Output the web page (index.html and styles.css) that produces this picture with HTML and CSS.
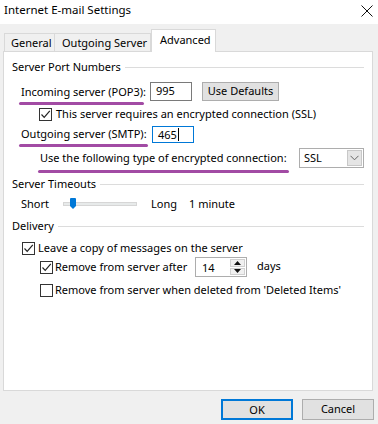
FILE: index.html
```html
<!DOCTYPE html>
<html lang="en">
<head>
    <meta charset="UTF-8">
    <title>Internet E-mail Settings</title>
    <link rel="stylesheet" href="styles.css">
</head>
<body>
    <div class="window">
        <div class="titlebar">
            <span class="title">Internet E-mail Settings</span>
            <svg class="close" width="12" height="12" viewBox="0 0 12 12">
                <path d="M0.5 0.5 L11.5 11.5 M11.5 0.5 L0.5 11.5" stroke="#111" stroke-width="1" fill="none"/>
            </svg>
        </div>

        <div class="tabs">
            <div class="tab tab-general">General</div>
            <div class="tab tab-outgoing">Outgoing Server</div>
            <div class="tab tab-active">Advanced</div>
        </div>

        <div class="panel">
            <div class="group-head">
                <span>Server Port Numbers</span>
                <i class="rule"></i>
            </div>

            <div class="row row-incoming">
                <span class="label mark mark-in">Incoming server (POP3):</span>
                <div class="field field-port">995</div>
                <div class="btn btn-defaults">Use Defaults</div>
            </div>

            <div class="row row-ssl">
                <span class="check checked">
                    <svg width="11" height="11" viewBox="0 0 11 11"><path d="M1.5 5.5 L4.2 8.3 L9.8 1.8" stroke="#222" stroke-width="1.2" fill="none"/></svg>
                </span>
                <span class="label">This server requires an encrypted connection (SSL)</span>
            </div>

            <div class="row row-outgoing">
                <span class="label mark mark-out">Outgoing server (SMTP):</span>
                <div class="field field-port field-focus">465<i class="caret"></i></div>
            </div>

            <div class="row row-encrypt">
                <span class="label mark mark-enc">Use the following type of encrypted connection:</span>
                <div class="select">
                    <span>SSL</span>
                    <span class="select-btn">
                        <svg width="9" height="6" viewBox="0 0 9 6"><path d="M0.5 0.8 L4.5 4.8 L8.5 0.8" stroke="#666" stroke-width="1" fill="none"/></svg>
                    </span>
                </div>
            </div>

            <div class="group-head group-timeouts">
                <span>Server Timeouts</span>
                <i class="rule"></i>
            </div>

            <div class="row row-slider">
                <span class="label short">Short</span>
                <div class="track">
                    <svg class="thumb" width="6" height="11" viewBox="0 0 6 11"><path d="M0 1 Q0 0 1 0 L5 0 Q6 0 6 1 L6 8 L3 11 L0 8 Z" fill="#0078D7"/></svg>
                </div>
                <span class="label long">Long</span>
                <span class="label">1 minute</span>
            </div>

            <div class="group-head group-delivery">
                <span>Delivery</span>
                <i class="rule"></i>
            </div>

            <div class="row row-leave">
                <span class="check checked">
                    <svg width="11" height="11" viewBox="0 0 11 11"><path d="M1.5 5.5 L4.2 8.3 L9.8 1.8" stroke="#222" stroke-width="1.2" fill="none"/></svg>
                </span>
                <span class="label">Leave a copy of messages on the server</span>
            </div>

            <div class="row row-after">
                <span class="check checked">
                    <svg width="11" height="11" viewBox="0 0 11 11"><path d="M1.5 5.5 L4.2 8.3 L9.8 1.8" stroke="#222" stroke-width="1.2" fill="none"/></svg>
                </span>
                <span class="label label-after">Remove from server after</span>
                <div class="spin">
                    <span class="spin-value">14</span>
                    <span class="spin-btns">
                        <span class="spin-up"><svg width="7" height="4" viewBox="0 0 7 4"><path d="M0 4 L3.5 0 L7 4 Z" fill="#111"/></svg></span>
                        <span class="spin-down"><svg width="7" height="4" viewBox="0 0 7 4"><path d="M0 0 L3.5 4 L7 0 Z" fill="#111"/></svg></span>
                    </span>
                </div>
                <span class="label days">days</span>
            </div>

            <div class="row row-deleted">
                <span class="check"></span>
                <span class="label">Remove from server when deleted from 'Deleted Items'</span>
            </div>
        </div>

        <div class="footer">
            <div class="btn btn-action btn-primary">OK</div>
            <div class="btn btn-action">Cancel</div>
        </div>
    </div>
</body>
</html>
```

FILE: styles.css
```css
body {
    margin: 0;
    font-family: "Noto Sans", "Open Sans", sans-serif;
    font-size: 11px;
    color: #000;
    background-color: #F0F0F0;
}

.window {
    width: 378px;
    height: 424px;
    background-color: #F0F0F0;
    overflow: hidden;
}

.titlebar {
    height: 24px;
    background: #FFFFFF;
    display: flex;
    align-items: center;
    justify-content: space-between;
    padding: 0 5px 4px 4px;
    box-sizing: border-box;
}

.title {
    font-size: 11.5px;
    line-height: 16px;
}

.close {
    display: block;
    margin-top: 2px;
}

.tabs {
    display: flex;
    align-items: flex-end;
    height: 22px;
    margin-top: 5px;
    padding-left: 4px;
    position: relative;
    z-index: 1;
    white-space: nowrap;
}

.tab {
    height: 18px;
    box-sizing: border-box;
    border: 1px solid #D9D9D9;
    border-bottom: none;
    padding: 0 0 0 6px;
    line-height: 17px;
    background: #F0F0F0;
}

.tab-general {
    width: 51px;
}

.tab-outgoing {
    width: 96px;
    border-left: none;
    padding-left: 7px;
}

.tab-active {
    width: 65px;
    height: 23px;
    margin-bottom: -1px;
    background: #FFFFFF;
    border-left: 1px solid #D9D9D9;
    line-height: 19px;
    padding-left: 8px;
}

.panel {
    width: 370px;
    height: 340px;
    margin-left: 3px;
    box-sizing: border-box;
    background: #FFFFFF;
    border: 1px solid #D9D9D9;
    padding: 8px 8px 0 8px;
}

.group-head {
    display: flex;
    align-items: center;
    height: 14px;
    line-height: 14px;
    white-space: nowrap;
}

.group-head .rule {
    flex: 1;
    height: 0;
    border-top: 1px solid #DCDCDC;
    margin-left: 4px;
}

.group-timeouts {
    margin-top: 9px;
}

.group-delivery {
    margin-top: 8px;
}

.row {
    display: flex;
    align-items: center;
    line-height: 14px;
}

.label {
    white-space: nowrap;
}

.mark {
    position: relative;
}

.mark::after {
    content: "";
    position: absolute;
    left: -2px;
    right: -3px;
    bottom: -6px;
    height: 3px;
    border-radius: 2px;
    background: #A24BA4;
}

.mark-in {
    width: 120px;
}

.mark-out {
    width: 122px;
}

.mark-out::after {
    right: -5px;
}

.row-incoming {
    height: 19px;
    margin-top: 8px;
    padding-left: 9px;
}

.field {
    height: 19px;
    box-sizing: border-box;
    border: 1px solid #7A7A7A;
    padding: 0 0 0 5px;
    line-height: 16px;
    background: #FFFFFF;
}

.field-port {
    width: 42px;
}

.row-incoming .field {
    margin-left: 9px;
}

.btn {
    box-sizing: border-box;
    background: #E1E1E1;
    border: 1px solid #ADADAD;
    text-align: center;
    white-space: nowrap;
}

.btn-defaults {
    width: 77px;
    height: 19px;
    line-height: 16px;
    margin-left: 10px;
}

.row-ssl {
    height: 14px;
    margin-top: 6px;
    padding-left: 27px;
}

.check {
    width: 13px;
    height: 13px;
    box-sizing: border-box;
    border: 1px solid #333333;
    background: #FFFFFF;
    display: flex;
    align-items: center;
    justify-content: center;
    margin-right: 4px;
    flex: none;
}

.check svg {
    display: block;
}

.row-outgoing {
    height: 18px;
    margin-top: 4px;
    padding-left: 9px;
}

.field-focus {
    height: 17px;
    border-color: #0078D7;
    margin-left: 9px;
    display: flex;
    align-items: center;
    line-height: 15px;
}

.caret {
    width: 1px;
    height: 13px;
    background: #000;
    margin-left: 1px;
}

.row-encrypt {
    height: 20px;
    margin-top: 5px;
    padding-left: 28px;
}

.mark-enc {
    width: 245px;
}

.mark-enc::after {
    bottom: -8px;
    right: -4px;
}

.select {
    width: 65px;
    height: 20px;
    box-sizing: border-box;
    border: 1px solid #ADADAD;
    margin-left: auto;
    display: flex;
    align-items: center;
    justify-content: space-between;
    padding: 0 1px 0 4px;
}

.select-btn {
    width: 15px;
    height: 16px;
    box-sizing: border-box;
    background: #E5E5E5;
    border: 1px solid #C8C8C8;
    display: flex;
    align-items: center;
    justify-content: center;
}

.row-slider {
    height: 14px;
    margin-top: 6px;
    padding-left: 9px;
}

.short {
    width: 30px;
}

.track {
    width: 74px;
    height: 4px;
    box-sizing: border-box;
    background: #E7EAEA;
    border: 1px solid #D6D6D6;
    margin-left: 12px;
    position: relative;
}

.thumb {
    position: absolute;
    left: 6px;
    top: -5px;
    display: block;
}

.long {
    margin-left: 14px;
    margin-right: 12px;
}

.row-leave {
    height: 14px;
    margin-top: 8px;
    padding-left: 10px;
}

.row-leave .check {
    margin-right: 3px;
}

.row-after {
    height: 20px;
    margin-top: 2px;
    padding-left: 28px;
}

.row-after .check,
.row-deleted .check {
    margin-right: 2px;
}

.label-after {
    width: 140px;
}

.spin {
    width: 52px;
    height: 20px;
    box-sizing: border-box;
    border: 1px solid #ADADAD;
    display: flex;
    justify-content: space-between;
    padding: 1px;
}

.spin-value {
    padding-left: 5px;
    line-height: 17px;
}

.spin-btns {
    width: 15px;
    display: flex;
    flex-direction: column;
    gap: 1px;
}

.spin-btns span {
    flex: 1;
    background: #F0F0F0;
    border: 1px solid #D0D0D0;
    display: flex;
    align-items: center;
    justify-content: center;
}

.days {
    margin-left: 10px;
    margin-top: -2px;
}

.row-deleted {
    height: 14px;
    margin-top: 6px;
    padding-left: 28px;
}

.footer {
    display: flex;
    justify-content: flex-end;
    gap: 9px;
    padding: 8px 4px 0 0;
}

.btn-action {
    width: 72px;
    height: 21px;
    line-height: 18px;
}

.btn-primary {
    border: 2px solid #0078D7;
    line-height: 17px;
}
```
